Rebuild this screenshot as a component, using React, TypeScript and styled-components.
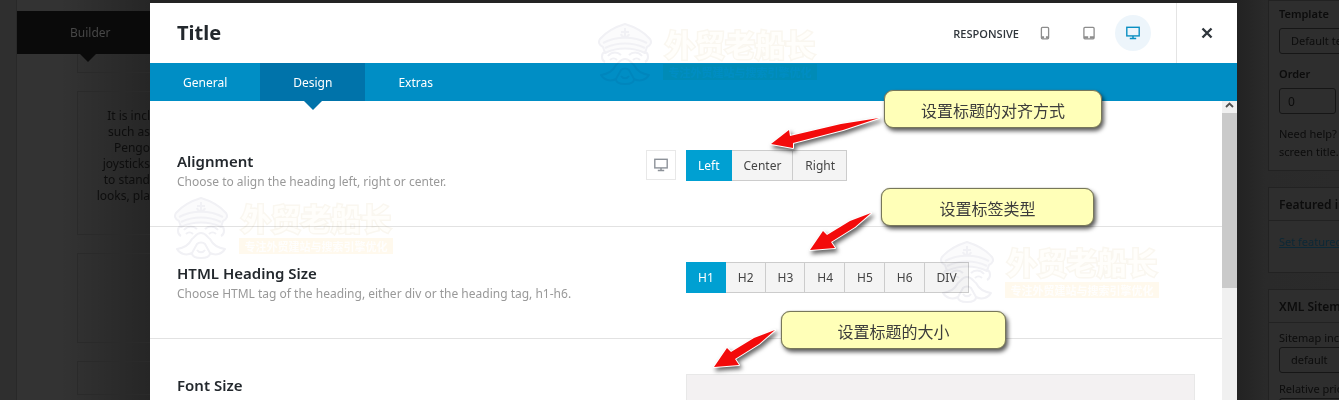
import React, { useState } from "react";
import styled, { createGlobalStyle, css } from "styled-components";

const GlobalStyle = createGlobalStyle`
  *, *::before, *::after { box-sizing: border-box; }
  body {
    margin: 0;
    background: #2b2b2b;
    font-family: "Noto Sans", "Noto Sans CJK SC", sans-serif;
    font-size: 12px;
  }
  button, input, select { font: inherit; margin: 0; padding: 0; border: 0; border-radius: 0; background: none; color: inherit; }
  button { cursor: pointer; }
  h1, h2, h3, p { margin: 0; font-weight: 400; }
`;

/* ---------- page ---------- */

const Page = styled.div`
  display: flex;
  height: 100vh;
  overflow: hidden;
`;

const BuilderPane = styled.section`
  flex: 0 0 150px;
  padding: 11px 0 0 17px;
  overflow: hidden;
  background: linear-gradient(90deg, rgba(0, 0, 0, 0) 60px, rgba(0, 0, 0, 0.26) 150px),
    linear-gradient(90deg, #2f2f2f 16px, #292929 16px, #292929 17px, #333 17px);
`;

const BuilderBar = styled.div`
  position: relative;
  height: 43px;
  padding-left: 53px;
  background: #0a0a0a;
  color: #474747;
  line-height: 43px;
  &::after {
    content: "";
    position: absolute;
    top: 100%;
    left: 63px;
    border: 8px solid transparent;
    border-top-color: #0a0a0a;
    border-bottom: 0;
  }
`;

const BuilderCanvas = styled.div`
  display: flex;
  flex-direction: column;
  gap: 18px;
  padding-left: 60px;
`;

const BuilderBlock = styled.div<{ $height: number; $open?: boolean }>`
  height: ${(p) => p.$height}px;
  padding-top: 16px;
  border: solid #2a2a2a;
  border-width: ${(p) => (p.$open ? "0 0 1px 1px" : "1px 0 1px 1px")};
`;

const BuilderText = styled.p`
  display: flex;
  flex-direction: column;
  align-items: flex-end;
  color: #0d0d0d;
  line-height: 16px;
  white-space: nowrap;
`;

const Sidebar = styled.aside`
  flex: 0 0 102px;
  display: flex;
  flex-direction: column;
  gap: 16px;
  padding-left: 31px;
  overflow: hidden;
  white-space: nowrap;
  color: #0c0c0c;
  background: linear-gradient(90deg, #222 0, #2a2a2a 28px, #2b2b2b);
`;

const Card = styled.section`
  flex: none;
  border: solid #222;
  border-width: 1px 0 1px 1px;
  background: #2e2e2e;
`;

const CardTitle = styled.h3`
  height: 33px;
  padding-left: 10px;
  border-bottom: 1px solid #222;
  font-size: 12px;
  font-weight: 600;
  line-height: 33px;
`;

const CardBody = styled.div<{ $top: number; $bottom: number }>`
  display: flex;
  flex-direction: column;
  align-items: flex-start;
  padding: ${(p) => p.$top}px 0 ${(p) => p.$bottom}px 10px;
  font-size: 11px;
  line-height: 18px;
`;

const FieldLabel = styled.label<{ $strong?: boolean }>`
  font-weight: ${(p) => (p.$strong ? 600 : 400)};
`;

const fieldBox = css`
  height: 26px;
  padding-left: 11px;
  border: 1px solid #161616;
  border-radius: 3px;
  line-height: 24px;
`;

const SideSelect = styled.select<{ $before: number; $after: number }>`
  ${fieldBox}
  appearance: none;
  width: 120px;
  margin: ${(p) => p.$before}px 0 ${(p) => p.$after}px;
`;

const SideInput = styled.input`
  ${fieldBox}
  width: 57px;
  padding-left: 8px;
  font-size: 12px;
  margin: 5px 0 11px;
`;

const SideLink = styled.a`
  color: #0c2836;
`;

/* ---------- modal ---------- */

const Modal = styled.main`
  position: relative;
  flex: 1;
  min-width: 0;
  display: flex;
  flex-direction: column;
  border-top: 3px solid #232323;
  background: #fff;
`;

const Header = styled.header`
  flex: 0 0 60px;
  display: flex;
  align-items: center;
  padding-left: 27px;
`;

const ModalTitle = styled.h1`
  flex: 1;
  color: #23282d;
  font-size: 20px;
  font-weight: 700;
  line-height: 28px;
`;

const Devices = styled.div`
  display: flex;
  align-items: center;
  gap: 8px;
  padding-right: 25px;
`;

const DevicesLabel = styled.span`
  color: #30363c;
  font-family: "Open Sans", sans-serif;
  font-size: 11px;
  font-weight: 600;
`;

const DeviceButton = styled.button<{ $active: boolean }>`
  display: grid;
  place-items: center;
  width: 36px;
  height: 36px;
  border-radius: 50%;
  color: ${(p) => (p.$active ? "#0a8fc2" : "#8d8d8d")};
  background: ${(p) => (p.$active ? "#edf5fb" : "transparent")};
`;

const CloseButton = styled.button`
  display: grid;
  place-items: center;
  align-self: stretch;
  width: 61px;
  border-left: 1px solid #e4e4e4;
  color: #30363c;
`;

const Tabs = styled.nav`
  flex: 0 0 38px;
  display: flex;
  background: #008ec5;
`;

const Tab = styled.button<{ $active: boolean }>`
  position: relative;
  padding: 0 33px;
  color: #fff;
  ${(p) =>
    p.$active &&
    css`
      background: #0073aa;
      &::after {
        content: "";
        position: absolute;
        top: 100%;
        left: calc(50% - 9px);
        border: 9px solid transparent;
        border-top-color: #0073aa;
        border-bottom: 0;
      }
    `}
`;

const Body = styled.div`
  flex: 1;
  min-height: 0;
  display: flex;
`;

const Options = styled.div`
  flex: 1;
  padding-top: 14px;
  overflow: hidden;
`;

const OptionRow = styled.section`
  display: grid;
  grid-template-columns: 1fr 1fr;
  padding: 35px 27px 34px;
  border-bottom: 1px solid #e2e2e2;
`;

const OptionInfo = styled.div`
  display: flex;
  justify-content: space-between;
  height: 42px;
  padding-right: 10px;
`;

const OptionTitle = styled.h2`
  color: #23282d;
  font-size: 15px;
  font-weight: 600;
  line-height: 22px;
`;

const OptionHint = styled.p`
  color: #999;
  line-height: 20px;
`;

const ScopeButton = styled.button`
  display: grid;
  place-items: center;
  width: 30px;
  height: 30px;
  border: 1px solid #e8e8e8;
  color: #8d9299;
`;

const Choices = styled.div`
  display: flex;
  align-self: start;
  height: 31px;
`;

const Choice = styled.button<{ $active: boolean }>`
  padding: 0 11px 0 12px;
  border: solid ${(p) => (p.$active ? "#00a0d2" : "#ccc")};
  border-width: 1px 1px 1px 0;
  background: ${(p) => (p.$active ? "#00a0d2" : "#f4f4f4")};
  color: ${(p) => (p.$active ? "#fff" : "#444")};
`;

const SizePanel = styled.div`
  height: 90px;
  border: 1px solid #e8e8e8;
  background: #f3f1f2;
`;

const Scrollbar = styled.div`
  flex: 0 0 15px;
  display: flex;
  flex-direction: column;
  align-items: center;
  background: #f0f0f0;
  color: #505050;
`;

const ScrollArrow = styled.svg`
  width: 15px;
  height: 12px;
`;

const ScrollThumb = styled.div`
  width: 100%;
  height: 175px;
  background: #cacaca;
`;

/* ---------- notes lying over the modal ---------- */

const Note = styled.div<{ $x: number; $y: number; $w: number }>`
  position: absolute;
  left: ${(p) => p.$x}px;
  top: ${(p) => p.$y}px;
  width: ${(p) => p.$w}px;
  height: 38px;
  border: 1px solid #77775a;
  border-radius: 9px;
  background: #ffffb8;
  box-shadow: 0 0 1px #77775a, 2px 3px 4px rgba(0, 0, 0, 0.65);
  color: #3c3c3c;
  font-family: "Noto Sans CJK SC", sans-serif;
  font-size: 16px;
  line-height: 38px;
  text-align: center;
`;

const ArrowSvg = styled.svg<{ $x: number; $y: number }>`
  position: absolute;
  left: ${(p) => p.$x}px;
  top: ${(p) => p.$y}px;
  overflow: visible;
  pointer-events: none;
  filter: drop-shadow(2px 3px 2px rgba(0, 0, 0, 0.6));
`;

const Mark = styled.div<{ $x: number; $y: number }>`
  position: absolute;
  left: ${(p) => p.$x}px;
  top: ${(p) => p.$y}px;
  display: flex;
  gap: 11px;
  mix-blend-mode: multiply;
  pointer-events: none;
  font-family: "Noto Sans CJK SC", sans-serif;
  white-space: nowrap;
`;

const MarkWords = styled.div`
  display: flex;
  flex-direction: column;
  align-items: center;
`;

const MarkName = styled.span`
  color: #fffefb;
  font-size: 30px;
  font-weight: 700;
  line-height: 41px;
  -webkit-text-stroke: 3px #faf7f0;
  paint-order: stroke fill;
`;

const MarkLine = styled.span`
  width: 154px;
  height: 16px;
  background: #fff9ed;
  color: #fffefd;
  font-size: 11px;
  font-weight: 700;
  line-height: 16px;
  text-align: center;
`;

const MonitorIcon = () => (
  <svg width="16" height="14" viewBox="0 0 16 14" fill="none" stroke="currentColor" aria-hidden="true">
    <rect x="1.8" y="1.3" width="12.4" height="8.6" strokeWidth="1.4" />
    <path d="M8 10v2M4.8 12.4h6.4" strokeWidth="1.5" />
  </svg>
);

const PhoneIcon = () => (
  <svg width="10" height="14" viewBox="0 0 10 14" fill="none" stroke="currentColor" aria-hidden="true">
    <rect x="1.4" y="1.4" width="7.2" height="11.4" rx="1" strokeWidth="1.3" />
    <path d="M1.5 11.4h2.6M5.9 11.4h2.6" strokeWidth="2.2" />
  </svg>
);

const TabletIcon = () => (
  <svg width="12" height="14" viewBox="0 0 12 14" fill="none" stroke="currentColor" aria-hidden="true">
    <rect x="0.9" y="1.4" width="10.2" height="11.4" rx="1" strokeWidth="1.3" />
    <path d="M1 11.4h4.2M6.8 11.4H11" strokeWidth="2.2" />
  </svg>
);

const Watermark = ({ x, y }: { x: number; y: number }) => (
  <Mark $x={x} $y={y} aria-hidden="true">
    <svg width="54" height="62" viewBox="0 0 54 62" fill="none" stroke="#f1f1f5" strokeWidth="2" strokeLinejoin="round">
      <path fill="#fbfbfc" d="M27 1C17 4 8 9 2 16c-2 3-1 6 3 8l2 6c12-6 28-6 40 0l2-6c4-2 5-5 3-8C46 9 37 4 27 1z" />
      <path d="M5 20c13-7 31-7 44 0M7 25c12-6 28-6 40 0" />
      <path d="M27 5v9M23 9h8M23 11c1 4 7 4 8 0" />
      <path d="M7 29c-4 1-4 8 0 10M47 29c4 1 4 8 0 10M10 33c4-5 10-4 13-1M31 32c3-3 9-4 13 1M12 37c2-2 5-2 7 0M35 37c2-2 5-2 7 0" />
      <path d="M27 36c-5 0-6 4-9 6-3 6-8 9-15 10 3 5 9 7 15 4 0 4 5 5 9 5s9-1 9-5c6 3 12 1 15-4-7-1-12-4-15-10-3-2-4-6-9-6z" />
      <path d="M18 56l5-9c2-2 6-2 8 0l5 9M23 53c2 3 6 3 8 0" />
    </svg>
    <MarkWords>
      <MarkName>外贸老船长</MarkName>
      <MarkLine>专注外贸建站与搜索引擎优化</MarkLine>
    </MarkWords>
  </Mark>
);

const Arrow = ({ x, y, points }: { x: number; y: number; points: string }) => (
  <ArrowSvg $x={x} $y={y} width="110" height="40" aria-hidden="true">
    <polygon points={points} fill="#f30b0b" stroke="#fff" strokeWidth="2" strokeLinejoin="round" paintOrder="stroke" />
  </ArrowSvg>
);

const ChoiceGroup = ({ label, items }: { label: string; items: string[] }) => {
  const [value, setValue] = useState(items[0]);
  return (
    <Choices role="group" aria-label={label}>
      {items.map((item) => (
        <Choice key={item} type="button" $active={item === value} aria-pressed={item === value} onClick={() => setValue(item)}>
          {item}
        </Choice>
      ))}
    </Choices>
  );
};

const devices = [
  { name: "Phone", Icon: PhoneIcon },
  { name: "Tablet", Icon: TabletIcon },
  { name: "Desktop", Icon: MonitorIcon },
];

const builderLines = ["It is incl", "such as", "Pengo", "joysticks", "to stand", "looks, pla"];

export default function App() {
  const [tab, setTab] = useState("Design");
  const [device, setDevice] = useState("Desktop");

  return (
    <>
      <GlobalStyle />
      <Page>
        <BuilderPane>
          <BuilderBar>Builder</BuilderBar>
          <BuilderCanvas>
            <BuilderBlock $height={19} $open />
            <BuilderBlock $height={144}>
              <BuilderText>
                {builderLines.map((line) => (
                  <span key={line}>{line}</span>
                ))}
              </BuilderText>
            </BuilderBlock>
            <BuilderBlock $height={90} />
            <BuilderBlock $height={34} />
          </BuilderCanvas>
        </BuilderPane>

        <Modal>
          <Header>
            <ModalTitle>Title</ModalTitle>
            <Devices>
              <DevicesLabel>RESPONSIVE</DevicesLabel>
              {devices.map(({ name, Icon }) => (
                <DeviceButton key={name} type="button" aria-label={name} $active={name === device} onClick={() => setDevice(name)}>
                  <Icon />
                </DeviceButton>
              ))}
            </Devices>
            <CloseButton type="button" aria-label="Close">
              <svg width="12" height="12" viewBox="0 0 12 12" stroke="currentColor" strokeWidth="2.4" aria-hidden="true">
                <path d="M1.5 1.5l9 9M10.5 1.5l-9 9" />
              </svg>
            </CloseButton>
          </Header>

          <Tabs>
            {["General", "Design", "Extras"].map((name) => (
              <Tab key={name} type="button" $active={name === tab} onClick={() => setTab(name)}>
                {name}
              </Tab>
            ))}
          </Tabs>

          <Body>
            <Options>
              <OptionRow>
                <OptionInfo>
                  <div>
                    <OptionTitle>Alignment</OptionTitle>
                    <OptionHint>Choose to align the heading left, right or center.</OptionHint>
                  </div>
                  <ScopeButton type="button" aria-label="Desktop value">
                    <MonitorIcon />
                  </ScopeButton>
                </OptionInfo>
                <ChoiceGroup label="Alignment" items={["Left", "Center", "Right"]} />
              </OptionRow>
              <OptionRow>
                <OptionInfo>
                  <div>
                    <OptionTitle>HTML Heading Size</OptionTitle>
                    <OptionHint>Choose HTML tag of the heading, either div or the heading tag, h1-h6.</OptionHint>
                  </div>
                </OptionInfo>
                <ChoiceGroup label="HTML Heading Size" items={["H1", "H2", "H3", "H4", "H5", "H6", "DIV"]} />
              </OptionRow>
              <OptionRow>
                <OptionInfo>
                  <OptionTitle>Font Size</OptionTitle>
                </OptionInfo>
                <SizePanel />
              </OptionRow>
            </Options>
            <Scrollbar>
              <ScrollArrow viewBox="0 0 15 12" fill="none" stroke="currentColor" strokeWidth="1.8">
                <path d="M4 6l3.5-3.5L11 6" />
              </ScrollArrow>
              <ScrollThumb />
            </Scrollbar>
          </Body>

          <Watermark x={448} y={20} />
          <Watermark x={24} y={194} />
          <Watermark x={790} y={238} />

          <Arrow x={621} y={115} points="0,26 18,12 19,18 70,6 108,0 72,12 22,25 22,30" />
          <Arrow x={660} y={210} points="0,37 13,18 17,22 40,8 61,0 45,14 21,29 25,35" />
          <Arrow x={564} y={327} points="0,37 13,18 17,22 40,8 61,0 45,14 21,29 25,35" />

          <Note $x={734} $y={87} $w={218}>设置标题的对齐方式</Note>
          <Note $x={731} $y={185} $w={213}>设置标签类型</Note>
          <Note $x={631} $y={308} $w={225}>设置标题的大小</Note>
        </Modal>

        <Sidebar>
          <Card>
            <CardBody $top={4} $bottom={9}>
              <FieldLabel $strong htmlFor="template">Template</FieldLabel>
              <SideSelect id="template" $before={5} $after={11}>
                <option>Default template</option>
              </SideSelect>
              <FieldLabel $strong htmlFor="order">Order</FieldLabel>
              <SideInput id="order" defaultValue="0" />
              <p>Need help?</p>
              <p>screen title.</p>
            </CardBody>
          </Card>
          <Card>
            <CardTitle>Featured image</CardTitle>
            <CardBody $top={12} $bottom={21}>
              <SideLink href="#featured">Set featured image</SideLink>
            </CardBody>
          </Card>
          <Card>
            <CardTitle>XML Sitemap</CardTitle>
            <CardBody $top={6} $bottom={20}>
              <FieldLabel htmlFor="sitemap">Sitemap include</FieldLabel>
              <SideSelect id="sitemap" $before={0} $after={7}>
                <option>default</option>
              </SideSelect>
              <FieldLabel htmlFor="priority">Relative priority</FieldLabel>
              <SideSelect id="priority" $before={0} $after={7}>
                <option>auto</option>
              </SideSelect>
            </CardBody>
          </Card>
        </Sidebar>
      </Page>
    </>
  );
}
